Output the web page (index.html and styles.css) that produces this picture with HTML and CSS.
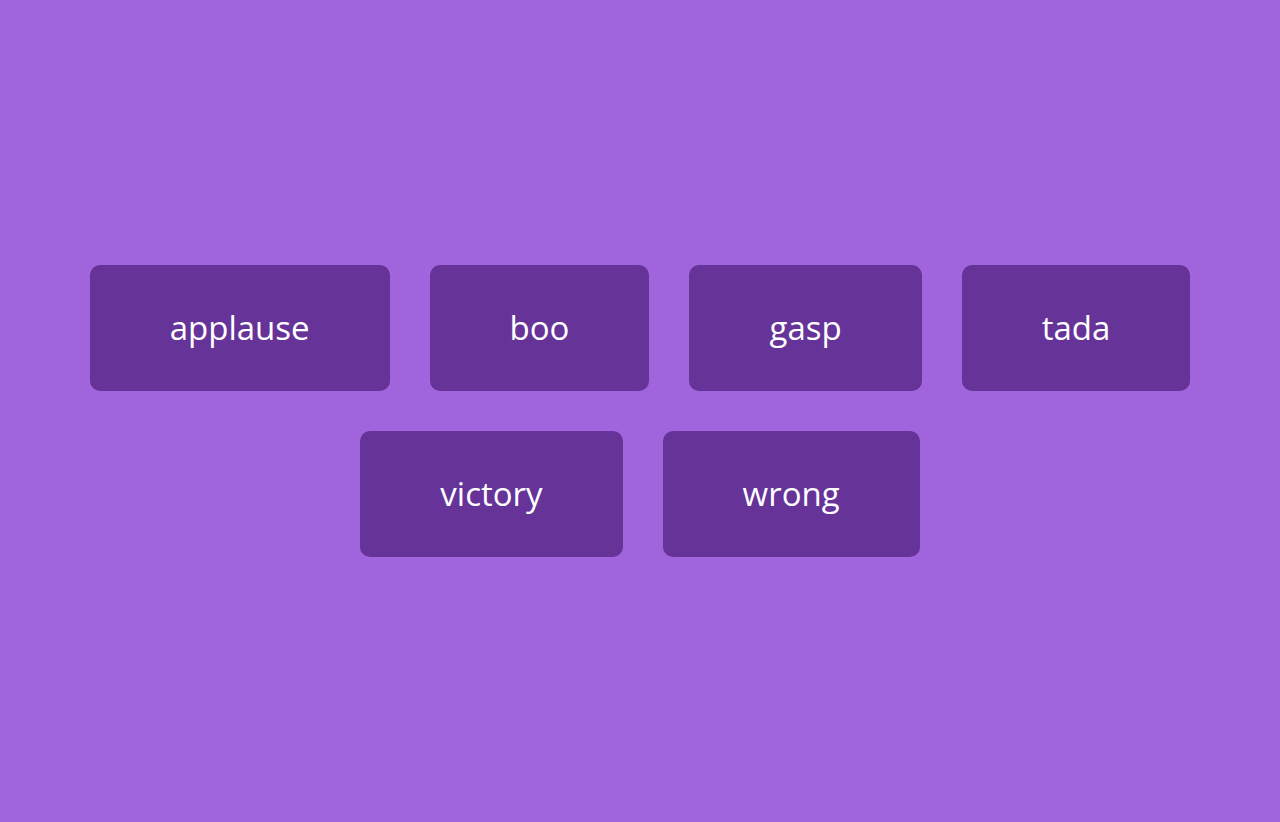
FILE: index.html
```html
<!DOCTYPE html>
<html lang="en">
<head>
<meta charset="UTF-8">
<title>Sound Board</title>
<link rel="stylesheet" href="styles.css">
</head>
<body>
  <div class="buttons">
    <button class="btn">applause</button>
    <button class="btn">boo</button>
    <button class="btn">gasp</button>
    <button class="btn">tada</button>
    <button class="btn">victory</button>
    <button class="btn">wrong</button>
  </div>
</body>
</html>
```
FILE: styles.css
```css
* { box-sizing: border-box; }
body {
  margin: 0;
  height: 100vh;
  background-color: #a064dc;
  font-family: "Open Sans", "Noto Sans", sans-serif;
  display: flex;
  align-items: center;
  justify-content: center;
  overflow: hidden;
}
.buttons {
  display: flex;
  flex-wrap: wrap;
  justify-content: center;
  max-width: 1160px;
}
.btn {
  background-color: #663399;
  border: none;
  border-radius: 10px;
  color: #fff;
  font-family: inherit;
  font-size: 33px;
  line-height: 46px;
  padding: 40px 80px;
  margin: 20px;
  cursor: pointer;
}
```
